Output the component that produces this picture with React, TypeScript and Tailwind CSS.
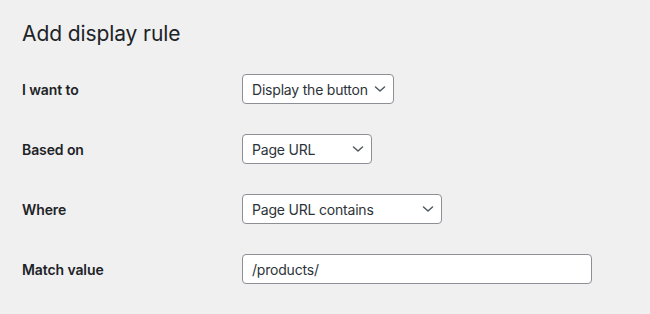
import React from "react";

const Chevron = () => (
  <svg
    width="12"
    height="8"
    viewBox="0 0 12 8"
    className="pointer-events-none absolute right-[8px] top-1/2 -translate-y-1/2"
    fill="none"
  >
    <path d="M1.5 2 L6 6 L10.5 2" stroke="#50575e" strokeWidth="1.5" strokeLinecap="round" strokeLinejoin="round" />
  </svg>
);

function Select({ value, width }: { value: string; width: string }) {
  return (
    <div className={`relative ${width}`}>
      <div className="flex h-[30px] w-full items-center overflow-hidden whitespace-nowrap rounded-[4px] border border-[#8c8f94] bg-white pl-[9px] pr-[20px] text-[14px] tracking-[-0.2px] text-[#2c3338]">
        {value}
      </div>
      <Chevron />
    </div>
  );
}

function Row({ label, children }: { label: string; children: React.ReactNode }) {
  return (
    <div className="flex h-[60px] items-center">
      <div className="w-[220px] text-[14px] font-semibold tracking-[-0.1px] text-[#1d2327]">{label}</div>
      {children}
    </div>
  );
}

export default function App() {
  return (
    <div
      className="h-[314px] w-[650px] bg-[#f0f0f0] pl-[22px] text-[#1d2327]"
      style={{ fontFamily: "Inter, 'Noto Sans', sans-serif" }}
    >
      <h2 className="pt-[20px] pb-[11px] text-[21px] leading-[28px] font-normal tracking-[-0.1px] text-[#1d2327]">Add display rule</h2>
      <Row label="I want to">
        <Select value="Display the button" width="w-[152px]" />
      </Row>
      <Row label="Based on">
        <Select value="Page URL" width="w-[130px]" />
      </Row>
      <Row label="Where">
        <Select value="Page URL contains" width="w-[200px]" />
      </Row>
      <Row label="Match value">
        <div className="flex h-[30px] w-[350px] items-center rounded-[4px] border border-[#8c8f94] bg-white pl-[9px] text-[14px] tracking-[-0.2px] text-[#2c3338]">
          /products/
        </div>
      </Row>
    </div>
  );
}
